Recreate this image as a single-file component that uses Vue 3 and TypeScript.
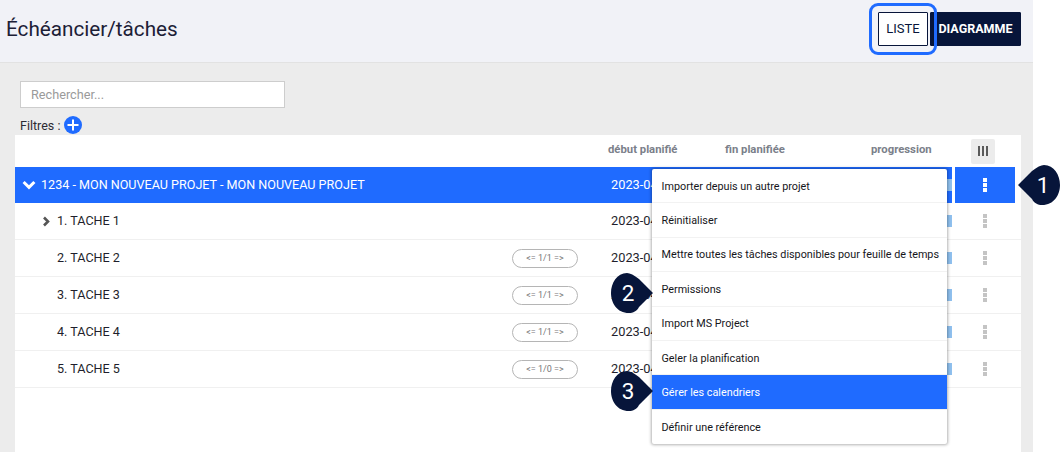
<script setup lang="ts">
interface TaskRow {
  label: string;
  badge?: string;
  expandable?: boolean;
}

const rows: TaskRow[] = [
  { label: "1. TACHE 1", expandable: true },
  { label: "2. TACHE 2", badge: "<= 1/1 =>" },
  { label: "3. TACHE 3", badge: "<= 1/1 =>" },
  { label: "4. TACHE 4", badge: "<= 1/1 =>" },
  { label: "5. TACHE 5", badge: "<= 1/0 =>" },
];

const menuItems = [
  "Importer depuis un autre projet",
  "Réinitialiser",
  "Mettre toutes les tâches disponibles pour feuille de temps",
  "Permissions",
  "Import MS Project",
  "Geler la planification",
  "Gérer les calendriers",
  "Définir une référence",
];

// teardrop pointing right, mirrored for the first callout
const calloutPath = "M42 20 28 6C23 2 19 0 16 0 6 0 0 10 0 20 0 30 6 40 18 40 22 40 26 38 28 34Z";
</script>

<template>
  <div class="page">
    <header class="topbar">
      <h1>Échéancier/tâches</h1>
      <div class="views">
        <button class="view view-active">LISTE</button>
        <button class="view view-dark">DIAGRAMME</button>
      </div>
    </header>

    <main class="content">
      <input class="search" type="text" placeholder="Rechercher..." />
      <div class="filters">
        <span>Filtres :</span>
        <span class="add">
          <svg width="18" height="18" viewBox="0 0 18 18">
            <path d="M9 3.5v11M3.5 9h11" stroke="#fff" stroke-width="2" fill="none" />
          </svg>
        </span>
      </div>

      <section class="table">
        <div class="row head">
          <span class="name"></span>
          <span class="start">début planifié</span>
          <span class="end">fin planifiée</span>
          <span class="progress">progression</span>
          <span class="actions">
            <span class="columns">
              <i></i><i></i><i></i>
            </span>
          </span>
        </div>

        <div class="row project">
          <span class="name">
            <svg class="chev-down" width="14" height="10" viewBox="0 0 14 10">
              <path d="M1.6 2 7 7.4 12.4 2" stroke="#fff" stroke-width="3" fill="none" />
            </svg>
            1234 - MON NOUVEAU PROJET - MON NOUVEAU PROJET
          </span>
          <span class="start">2023-04-03</span>
          <span class="end"></span>
          <span class="progress"><b class="bar"></b></span>
          <span class="actions"><span class="dots"><i></i><i></i><i></i></span></span>
        </div>

        <div v-for="row in rows" :key="row.label" class="row task">
          <span class="name">
            <svg v-if="row.expandable" class="chev-right" width="9" height="11" viewBox="0 0 9 11">
              <path d="M2 1.5 6 5.5 2 9.5" stroke="#555" stroke-width="2.6" fill="none" />
            </svg>
            {{ row.label }}
          </span>
          <span v-if="row.badge" class="badge">{{ row.badge }}</span>
          <span class="start">2023-04-03</span>
          <span class="end"></span>
          <span class="progress"><b class="bar"></b></span>
          <span class="actions"><span class="dots"><i></i><i></i><i></i></span></span>
        </div>
      </section>

      <ul class="menu">
        <li v-for="item in menuItems" :key="item" :class="{ hot: item === 'Gérer les calendriers' }">
          {{ item }}
        </li>
      </ul>

      <svg class="callout one" width="42" height="40" viewBox="0 0 42 40">
        <path :d="calloutPath" transform="matrix(-1 0 0 1 42 0)" fill="#07153a" />
        <text x="25" y="28" text-anchor="middle">1</text>
      </svg>
      <svg class="callout two" width="42" height="40" viewBox="0 0 42 40">
        <path :d="calloutPath" fill="#07153a" />
        <text x="17" y="28" text-anchor="middle">2</text>
      </svg>
      <svg class="callout three" width="42" height="40" viewBox="0 0 42 40">
        <path :d="calloutPath" fill="#07153a" />
        <text x="17" y="28" text-anchor="middle">3</text>
      </svg>
    </main>
  </div>
</template>

<style>
html,
body {
  margin: 0;
  height: 100%;
  overflow: hidden;
  background: #fff;
}
</style>

<style scoped>
.page {
  width: 1033px;
  height: 452px;
  display: flex;
  flex-direction: column;
  background: #ececec;
  font-family: Roboto, "Liberation Sans", sans-serif;
  color: #07153a;
}

.topbar {
  height: 63px;
  flex: none;
  box-sizing: border-box;
  display: flex;
  align-items: center;
  justify-content: space-between;
  padding: 0 12px 5px 6px;
  background: #f1f2f7;
  border-bottom: 1px solid #e2e2e2;
}

.topbar h1 {
  margin: 0;
  font-size: 20.7px;
  font-weight: 400;
  color: #1c2036;
}

.views {
  display: flex;
  gap: 2px;
}

.view {
  height: 34px;
  box-sizing: border-box;
  border: 1px solid #07153a;
  border-radius: 1px;
  font: 500 13px Roboto, sans-serif;
  padding: 0;
}

.view-active {
  position: relative;
  z-index: 1;
  width: 50px;
  background: #fff;
  color: #07153a;
  font-weight: 400;
}

.view-active::after {
  content: "";
  position: absolute;
  inset: -10px;
  border: 3px solid #1f6bff;
  border-radius: 9px;
}

.view-dark {
  width: 91px;
  background: #07153a;
  color: #fff;
  font-weight: 700;
  font-size: 12.5px;
}

.content {
  position: relative;
  flex: 1;
  display: flex;
  flex-direction: column;
  padding: 18px 12px 0 15px;
}

.search {
  width: 265px;
  height: 27px;
  box-sizing: border-box;
  margin-left: 5px;
  padding: 0 10px;
  border: 1px solid #cdcdcd;
  background: #fff;
  font: 400 12.7px Roboto, sans-serif;
}

.search::placeholder {
  color: #9a9a9a;
}

.filters {
  display: flex;
  align-items: center;
  gap: 4px;
  height: 18px;
  margin: 8px 0 1px 5px;
  font-size: 12.5px;
  color: #2b2b33;
}

.add {
  width: 18px;
  height: 18px;
  display: flex;
  border-radius: 50%;
  background: #1f6bff;
}

.table {
  flex: 1;
  background: #fff;
}

.row {
  display: flex;
  align-items: center;
  position: relative;
  font-size: 12.58px;
}

.head {
  height: 32px;
  font-weight: 700;
  font-size: 11.3px;
  color: #7b7f8a;
  padding-bottom: 3px;
  box-sizing: border-box;
}

.project {
  width: 1006px;
  height: 36px;
  background: #1f6bff;
  color: #fff;
}

.task {
  height: 37px;
  box-sizing: border-box;
  border-bottom: 1px solid #f0f0f0;
  color: #1f1f2c;
}

.name {
  display: flex;
  align-items: center;
  width: 596px;
  flex: none;
  box-sizing: border-box;
  white-space: nowrap;
}

.head .name {
  width: 593px;
}

.project .name,
.project .start,
.task .name,
.task .start {
  margin-bottom: 2px;
}

.project .start,
.task .start {
  font-size: 12.8px;
}

.project .name {
  padding-left: 7px;
  gap: 5px;
}

.task .name {
  padding-left: 42px;
  position: relative;
}

.chev-down {
  margin-top: 2px;
}

.chev-right {
  position: absolute;
  left: 27px;
  margin-top: 2px;
}

.badge {
  position: absolute;
  left: 497px;
  width: 66px;
  height: 19px;
  box-sizing: border-box;
  border: 1px solid #b5b5b5;
  border-radius: 10px;
  text-align: center;
  font-size: 9px;
  line-height: 17px;
  color: #777;
}

.start {
  width: 117px;
  flex: none;
}

.end {
  width: 146px;
  flex: none;
}

.progress {
  width: 78px;
  flex: none;
  display: flex;
  justify-content: flex-end;
  white-space: nowrap;
}

.head .progress {
  justify-content: flex-start;
}

.bar {
  width: 60px;
  height: 12px;
  background: #8fc0ee;
}

.actions {
  width: 60px;
  margin-left: 3px;
  flex: none;
  display: flex;
  align-items: center;
  justify-content: center;
  align-self: stretch;
}

.head .actions {
  margin-left: 4px;
}

.project .progress {
  align-self: stretch;
  align-items: center;
}

.project::after {
  content: "";
  position: absolute;
  top: 0;
  bottom: 0;
  left: 937px;
  width: 3px;
  background: #fff;
}

.project::before {
  content: "";
  position: absolute;
  top: 0;
  bottom: 0;
  right: 0;
  width: 6px;
  background: #fff;
}

.columns {
  width: 24px;
  height: 25px;
  margin-top: 3px;
  display: flex;
  align-items: center;
  justify-content: center;
  gap: 2px;
  background: #ececec;
  border-radius: 2px;
}

.columns i {
  width: 2px;
  height: 10px;
  background: #5a5a5a;
}

.dots {
  display: flex;
  flex-direction: column;
  gap: 1px;
}

.dots i {
  width: 4px;
  height: 4px;
  background: #c4c4c4;
}

.project .dots i {
  background: #fff;
}

.menu {
  position: absolute;
  left: 652px;
  top: 106px;
  width: 295px;
  margin: 0;
  padding: 0;
  list-style: none;
  background: #fff;
  border-radius: 2px;
  box-shadow: 0 0 3px 1px rgba(0, 0, 0, 0.3);
  font-size: 10.8px;
  font-weight: 400;
  color: #16161b;
}

.menu li {
  height: 34.4px;
  box-sizing: border-box;
  display: flex;
  align-items: center;
  padding: 1px 0 0 9.5px;
  border-bottom: 1px solid #f2f2f2;
  white-space: nowrap;
}

.menu li:last-child {
  border-bottom: 0;
}

.menu .hot {
  background: #1f6bff;
  color: #fff;
}

.callout {
  position: absolute;
}

.callout text {
  font: 400 22.5px Roboto, sans-serif;
  fill: #fff;
}

.one {
  left: 1018px;
  top: 102px;
}

.two {
  left: 611px;
  top: 210px;
}

.three {
  left: 611px;
  top: 308px;
}
</style>
